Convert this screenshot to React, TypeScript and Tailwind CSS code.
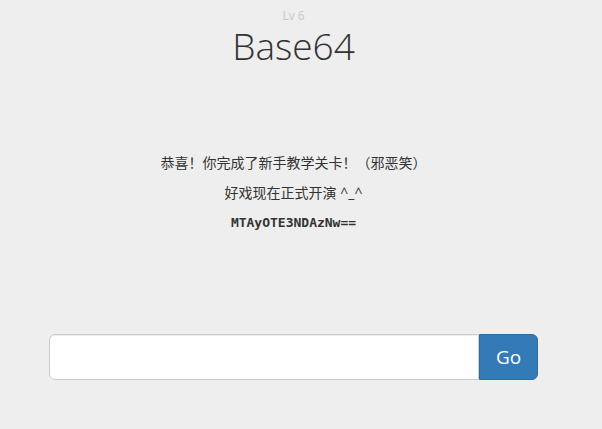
export default function App() {
  return (
    <div className="min-h-[429px] w-full bg-[#eeeeee]" style={{ fontFamily: '"Open Sans", "Noto Sans CJK SC", sans-serif' }}>
      <div className="w-[587px] flex flex-col items-center">
        <div className="pt-[9px] text-[12px] leading-[14px] text-[#c8c8c8]">Lv 6</div>
        <h1 className="mt-[4px] text-[37px] leading-[38px] font-light text-[#333]">Base64</h1>

        <div className="mt-[88px] flex flex-col items-center text-[14px] text-[#333]">
          <p className="leading-[20px]">恭喜！你完成了新手教学关卡！（邪恶笑）</p>
          <p className="mt-[10px] leading-[20px]">好戏现在正式开演 ^_^</p>
          <p
            className="mt-[10px] leading-[20px] font-bold text-[13px]"
            style={{ fontFamily: '"DejaVu Sans Mono", "Liberation Mono", monospace' }}
          >
            MTAyOTE3NDAzNw==
          </p>
        </div>

        <div className="mt-[101px] w-[489px] flex h-[46px]">
          <input
            type="text"
            className="flex-1 min-w-0 h-full bg-white border border-[#cccccc] rounded-l-[6px] px-4 outline-none shadow-[inset_0_1px_1px_rgba(0,0,0,0.075)]"
          />
          <button className="w-[59px] h-full bg-[#337ab7] border border-[#2e6da4] text-white text-[19px] rounded-r-[6px]">
            Go
          </button>
        </div>
      </div>
    </div>
  )
}
